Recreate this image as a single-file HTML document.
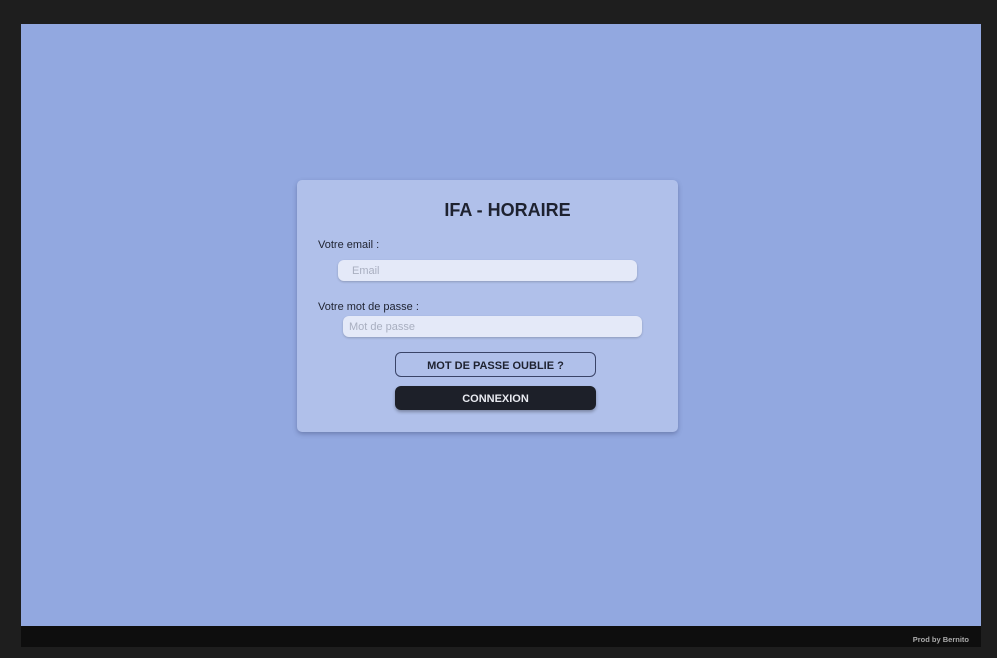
<!DOCTYPE html>
<html><head><meta charset="utf-8"><style>
*{margin:0;padding:0;box-sizing:border-box}
body{width:997px;height:658px;background:#1e1e1e;position:relative;overflow:hidden;font-family:"Liberation Sans",sans-serif}
.main{position:absolute;left:21px;top:24px;width:960px;height:602px;background:#92a8e0}
.foot{position:absolute;left:21px;top:626px;width:960px;height:21px;background:#0e0e0e;color:#aaa;font-size:7.5px;font-weight:bold;text-align:right;padding-right:12px;line-height:27px}
.card{position:absolute;left:297px;top:180px;width:381px;height:252px;background:#b0c0ea;border-radius:5px;box-shadow:0 2px 5px rgba(40,50,90,.35)}
.t{position:absolute;left:0;width:100%;top:20px;text-align:center;font-size:18px;font-weight:bold;color:#1e2230;padding-left:40px}
.l{position:absolute;left:21px;font-size:11px;color:#1e2230}
.in{position:absolute;width:299px;height:21px;background:#e4e9f8;border-radius:6px;box-shadow:0 1px 2px rgba(0,0,0,.2);font-size:11px;color:#a9afc0;line-height:23px}
.b{position:absolute;left:98px;width:201px;text-align:center;font-size:11px;font-weight:bold;border-radius:6px}
</style></head><body>
<div class="main"></div>
<div class="card">
<div class="t">IFA - HORAIRE</div>
<div class="l" style="top:59px">Votre email :</div>
<div class="in" style="left:41px;top:80px;padding-left:14px">Email</div>
<div class="l" style="top:121px">Votre mot de passe :</div>
<div class="in" style="left:46px;top:136px;padding-left:6px">Mot de passe</div>
<div class="b" style="top:172px;height:25px;line-height:27px;border:1px solid #3a4468;color:#1e2230">MOT DE PASSE OUBLIE ?</div>
<div class="b" style="top:206px;height:24px;line-height:27px;background:#1d2029;color:#e8eaf0;box-shadow:0 2px 3px rgba(0,0,0,.3)">CONNEXION</div>
</div>
<div class="foot">Prod by Bernito</div>
</body></html>
